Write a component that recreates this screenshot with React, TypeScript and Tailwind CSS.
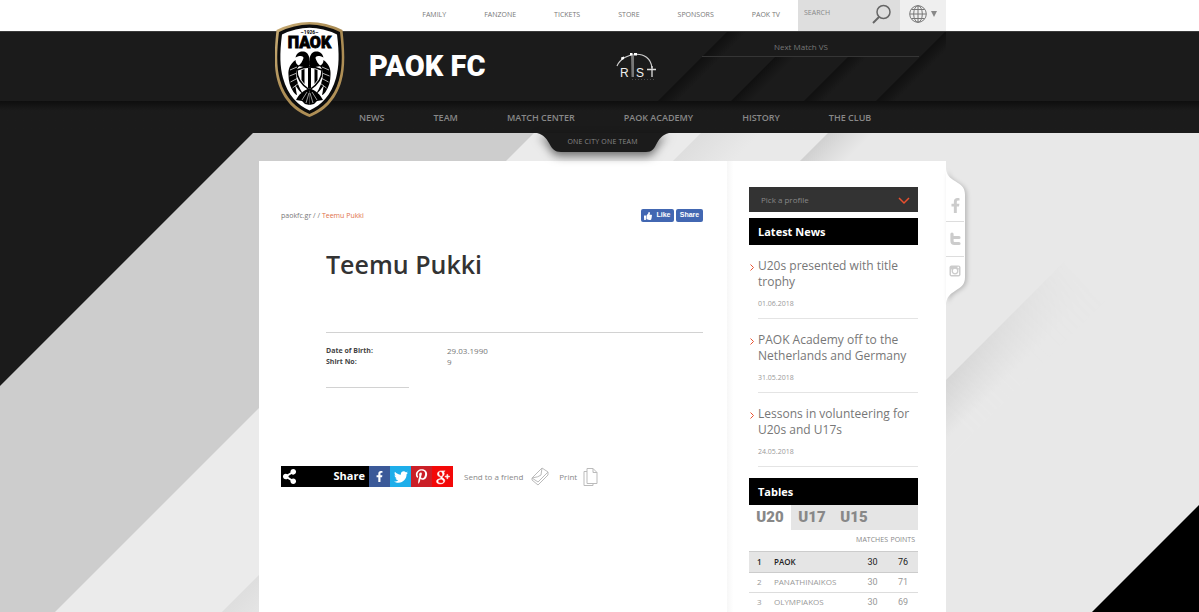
import type { ReactNode } from "react";
import { FaFacebookF, FaPinterestP, FaShareAlt, FaThumbsUp, FaTwitter } from "react-icons/fa";
import { TiSocialGooglePlus } from "react-icons/ti";

const topLinks = ["FAMILY", "FANZONE", "TICKETS", "STORE", "SPONSORS", "PAOK TV"];
const mainLinks = ["NEWS", "TEAM", "MATCH CENTER", "PAOK ACADEMY", "HISTORY", "THE CLUB"];

const news = [
  { title: "U20s presented with title trophy", date: "01.06.2018" },
  { title: "PAOK Academy off to the Netherlands and Germany", date: "31.05.2018" },
  { title: "Lessons in volunteering for U20s and U17s", date: "24.05.2018" },
];

const standings = [
  { rank: 1, team: "PAOK", matches: 30, points: 76 },
  { rank: 2, team: "PANATHINAIKOS", matches: 30, points: 71 },
  { rank: 3, team: "OLYMPIAKOS", matches: 30, points: 69 },
];

const display = "font-['Roboto',sans-serif]";

function Container({ children, className = "" }: { children: ReactNode; className?: string }) {
  return (
    <div className="pl-1.5">
      <div className={`relative mx-auto w-full max-w-[687px] ${className}`}>{children}</div>
    </div>
  );
}

function Backdrop() {
  return (
    <svg
      className="absolute inset-x-0 top-0 h-[612px] w-full"
      viewBox="0 0 1199 612"
      preserveAspectRatio="xMidYMin slice"
      aria-hidden="true"
    >
      <defs>
        <linearGradient id="fold-a" gradientUnits="userSpaceOnUse" x1="417" y1="417" x2="447" y2="447">
          <stop offset="0" stopColor="#dedede" />
          <stop offset="1" stopColor="#e9e9e9" />
        </linearGradient>
        <linearGradient id="fold-b" gradientUnits="userSpaceOnUse" x1="480" y1="480" x2="503" y2="503">
          <stop offset="0" stopColor="#d0d0d0" />
          <stop offset="1" stopColor="#e8e8e8" />
        </linearGradient>
        <linearGradient id="fold-c" gradientUnits="userSpaceOnUse" x1="663" y1="663" x2="693" y2="693">
          <stop offset="0" stopColor="#d3d3d3" />
          <stop offset="1" stopColor="#e8e8e8" />
        </linearGradient>
        <linearGradient id="fade" gradientUnits="userSpaceOnUse" x1="930" y1="396" x2="1065" y2="261">
          <stop offset="0" stopColor="#fff" />
          <stop offset="1" stopColor="#000" />
        </linearGradient>
        <mask id="fold-mask">
          <rect width="1199" height="612" fill="url(#fade)" />
        </mask>
      </defs>
      <rect width="1199" height="612" fill="#e8e8e8" />
      <path d="M534 133H701L222 612H55Z" fill="#ebebeb" />
      <path d="M701 133H828L349 612H222Z" fill="url(#fold-a)" />
      <path d="M828 133H900L800 233H728Z" fill="url(#fold-b)" />
      <path d="M900 426L1100 226H1180L900 506Z" fill="url(#fold-c)" mask="url(#fold-mask)" />
      <path d="M253 133H534L55 612H0V386Z" fill="#cdcdcd" />
      <path d="M0 133H253L0 386Z" fill="#1b1b1b" />
      <path d="M1199 505V612H1092Z" fill="#000" />
    </svg>
  );
}

function Crest() {
  const half = (
    <>
      <path d="M34.500 44C31 43 29.500 41 29 38C28.500 35 26 34 20.500 36.500C21.500 32.500 24 30 28.500 30.500C32.500 31 34.500 35 34.500 39Z" />
      <path d="M29 36C27 41 26 43 23 45L34.500 47V40Z" />
      <path d="M20.500 39C15 43 13 48 13.500 54C13.500 60 15 66 18.500 71C19.500 72.500 21 74 22 74C21 70 21 67 20 64C23 68 24.500 71 28 73C24 67 21.500 60 21 53C21 49 23 46 24.500 45C22 44 20.500 42 20.500 39Z" />
      <path d="M15 49L22 46M14.500 55L22 52M15.500 61L23 57M17.500 67L24 62" stroke="#fff" strokeWidth="0.700" />
      <path d="M34.500 67C28 70 24 73 21 79L27 80L30 83L34.500 84Z" />
      <path d="M32 71L27 79M34 72L31 82" stroke="#fff" strokeWidth="0.600" />
    </>
  );
  return (
    <svg viewBox="0 0 70 97" className="h-[97px] w-[70px]" role="img" aria-label="PAOK crest">
      <defs>
        <linearGradient id="gold" x1="0" x2="1" y1="0" y2="1">
          <stop offset="0" stopColor="#c9ad76" />
          <stop offset="0.500" stopColor="#a98a52" />
          <stop offset="1" stopColor="#b5945a" />
        </linearGradient>
      </defs>
      <path d="M1.500 9Q34.500-7 67.500 9C70 32 70 48 66.500 60C61 80 48 91 34.500 96C21 91 8 80 2.500 60C-1 48-1 32 1.500 9Z" fill="url(#gold)" />
      <path d="M4 11Q34.500-4 65 11C67.500 32 67.500 47 64 59C59 77 47 88 34.500 93C22 88 10 77 5 59C1.500 47 1.500 32 4 11Z" fill="#0c0c0c" />
      <path d="M7 13.500Q34.500 0 62 13.500C64.500 33 64 46 61 57C56.500 74 46 84.500 34.500 89.500C23 84.500 12.500 74 8 57C5 46 4.500 33 7 13.500Z" fill="#fff" />
      <text x="34.500" y="12.500" textAnchor="middle" className={`text-[5px] font-bold ${display}`}>–1926–</text>
      <text x="34.500" y="27" textAnchor="middle" stroke="#000" strokeWidth="0.800" className={`text-[16px] font-black ${display}`}>ΠΑΟΚ</text>
      <g>{half}</g>
      <g transform="matrix(-1 0 0 1 69 0)">{half}</g>
      <path d="M22 49Q34.500 43 47 49C47.500 58 42 64 34.500 69C27 64 21.500 58 22 49Z" fill="#fff" stroke="#000" strokeWidth="1.500" />
      <path d="M26.500 49V59L29.500 63V48ZM33 47H36V67L34.500 68L33 67ZM39.500 48V63L42.500 59V49Z" />
    </svg>
  );
}

function RistLogo() {
  return (
    <svg viewBox="0 0 42 30" className="h-[30px] w-[42px]" role="img" aria-label="RIST">
      <path d="M1 14C7 0 34-4 36 16" fill="none" stroke="#ccc" strokeWidth="1.200" />
      <path d="M15 2H18V25H15.500Z" fill="#777" />
      <path d="M14 1H16.500V3.500H14ZM18 1H21V3.500H18ZM5 5.500L8 4.500V7L5.500 8Z" fill="#fff" />
      <text x="4" y="25" fill="#eee" className="font-['Liberation_Sans',sans-serif] text-[12px]">R</text>
      <text x="20" y="25" fill="#eee" className="font-['Liberation_Sans',sans-serif] text-[12px]">S</text>
      <path d="M31 17.500H40M36 14V25" fill="none" stroke="#ddd" strokeWidth="1.300" />
      <path d="M16 27.500H38" stroke="#555" strokeWidth="0.800" strokeDasharray="1 2" />
    </svg>
  );
}

function HeaderFolds() {
  return (
    <svg viewBox="0 0 290 69" className="absolute right-0 top-0 h-[69px] w-[290px]" aria-hidden="true">
      <defs>
        <linearGradient id="shade" x1="0" x2="1" y1="0" y2="0">
          <stop offset="0" stopColor="#101010" />
          <stop offset="1" stopColor="#1b1b1b" />
        </linearGradient>
      </defs>
      <g transform="skewX(-45)" fill="url(#shade)">
        <rect x="71" width="20" height="70" />
        <rect x="144" y="25" width="20" height="45" />
        <rect x="217" y="25" width="20" height="45" />
        <rect x="289" width="20" height="70" />
      </g>
      <path d="M46 24.500H263" stroke="#353535" />
    </svg>
  );
}

function SiteHeader() {
  return (
    <header className="relative z-10">
      <div className="bg-white">
        <Container className="flex h-[31px] justify-end">
          <nav className="mr-[18px] flex items-center gap-[38px] text-[7px] text-[#777]">
            {topLinks.map((link) => (
              <a key={link} href="#">{link}</a>
            ))}
          </nav>
          <form className="flex w-[102px] items-center bg-[#dedede] pb-1 pl-1.5 pr-2" onSubmit={(event) => event.preventDefault()}>
            <input
              aria-label="Search"
              placeholder="SEARCH"
              className="min-w-0 flex-1 bg-transparent text-[7px] outline-none placeholder:text-[#888]"
            />
            <button aria-label="Submit search">
              <svg viewBox="0 0 22 22" className="h-[22px] w-[22px] fill-none stroke-[#666]">
                <circle cx="13.500" cy="9" r="6.500" strokeWidth="1.500" />
                <path d="M9 14L3 20" strokeWidth="2" />
              </svg>
            </button>
          </form>
          <button className="flex w-[46px] items-center gap-[3px] bg-[#efefef] pb-1 pl-[9px]" aria-label="Choose language">
            <svg viewBox="0 0 18 18" className="h-[18px] w-[18px] fill-none stroke-[#777]">
              <circle cx="9" cy="9" r="8.300" />
              <ellipse cx="9" cy="9" rx="4.300" ry="8.300" />
              <path d="M9 1V17M1 9H17M2.500 4.500H15.500M2.500 13.500H15.500" />
            </svg>
            <svg viewBox="0 0 8 6" className="h-1.5 w-2 fill-[#888]">
              <path d="M1 0H7L4 6Z" />
            </svg>
          </button>
        </Container>
      </div>

      <div className="border-t border-[#3a3a3a] bg-[#1b1b1b]">
        <Container className="flex h-[69px] items-center">
          <HeaderFolds />
          <a href="#" className="absolute -top-[11px] left-4 z-10"><Crest /></a>
          <a href="#" className={`ml-[110px] text-[29px] font-black text-white ${display}`}>PAOK FC</a>
          <a href="#" className="absolute left-[357px] top-5"><RistLogo /></a>
          <p className="absolute right-[118px] top-[9px] text-[8px] leading-[12px] text-[#777]">Next Match VS</p>
        </Container>
      </div>

      <div className="bg-[#1b1b1b] bg-linear-to-b from-[#0e0e0e] to-[#1b1b1b] to-30%">
        <Container className="flex h-8 justify-center">
          <nav className="mr-auto ml-[100px] flex items-center gap-[49px] whitespace-nowrap pt-0.5 text-[9px] font-semibold text-[#888]">
            {mainLinks.map((link) => (
              <a key={link} href="#">{link}</a>
            ))}
          </nav>
          <div className="absolute left-1/2 top-full flex h-[19px] w-[132px] -translate-x-1/2 justify-center">
            <svg viewBox="0 0 132 19" className="absolute inset-0 h-[19px] w-[132px] overflow-visible drop-shadow-[0_4px_5px_rgba(0,0,0,0.55)]" aria-hidden="true">
              <path d="M0 0H132C125 2 123 5 120 10C117 16 115 19 109 19H24C18 19 15 16 12 10C9 5 7 2 0 0Z" fill="#1b1b1b" />
            </svg>
            <p className="relative pt-[3px] text-[7px] leading-[12px] tracking-wide text-[#888]">ONE CITY ONE TEAM</p>
          </div>
        </Container>
      </div>
    </header>
  );
}

function SocialRail() {
  return (
    <div className="absolute left-full top-2 flex h-[134px] w-[18px] flex-col">
      <svg viewBox="0 0 20 134" className="absolute left-0 top-0 h-[134px] w-5 overflow-visible drop-shadow-[2px_1px_2px_rgba(0,0,0,0.2)]" aria-hidden="true">
        <path d="M0 0C1 7 4 9 9 12C15 16 19 18 19 26V108C19 116 15 118 9 122C4 125 1 128 0 134Z" fill="#fff" />
      </svg>
      <a href="#" aria-label="Facebook" className="relative flex h-[53px] items-end justify-center border-b border-[#ddd] pb-2 text-[#ccc]">
        <FaFacebookF size={15} />
      </a>
      <a href="#" aria-label="Twitter" className="relative flex h-[35px] items-center justify-center border-b border-[#ddd]">
        <svg viewBox="0 0 12 14" className="h-[14px] w-3 fill-none stroke-[#ccc]">
          <path d="M3 2V9Q3 11.500 5.500 11.500H10M3 5.500H10" strokeWidth="3.200" strokeLinecap="round" />
        </svg>
      </a>
      <a href="#" aria-label="Instagram" className="relative flex justify-center pt-2">
        <svg viewBox="0 0 12 12" className="h-3 w-3">
          <rect x="0.500" y="0.500" width="11" height="11" rx="2" fill="#ccc" />
          <path d="M2 4.500H10V10H2ZM8.500 1.800H10V3.200H8.500Z" fill="#fff" />
          <circle cx="6" cy="6" r="2.800" fill="#fff" stroke="#ccc" strokeWidth="1.300" />
        </svg>
      </a>
    </div>
  );
}

function ShareBar() {
  return (
    <div className="mt-[78px] flex h-[21px] items-center text-white">
      <div className="flex h-full w-[88px] items-center justify-between bg-black pl-px pr-1">
        <FaShareAlt size={15} />
        <span className="text-[11px] font-bold">Share</span>
      </div>
      <a href="#" aria-label="Share on Facebook" className="flex h-full w-[21px] items-center justify-center bg-[#3b5998]">
        <FaFacebookF size={11} />
      </a>
      <a href="#" aria-label="Share on Twitter" className="flex h-full w-[21px] items-center justify-center bg-[#1eaeea]">
        <FaTwitter size={14} />
      </a>
      <a href="#" aria-label="Share on Pinterest" className="flex h-full w-[21px] items-center justify-center bg-[#cb1f27]">
        <FaPinterestP size={15} />
      </a>
      <a href="#" aria-label="Share on Google Plus" className="flex h-full w-[21px] items-center justify-center bg-[#f30808]">
        <TiSocialGooglePlus size={22} stroke="currentColor" strokeWidth={0.6} />
      </a>
      <a href="#" className="ml-[11px] flex items-center gap-2 text-[8px] text-[#888]">
        Send to a friend
        <svg viewBox="0 0 18 19" className="h-[19px] w-[18px] fill-none stroke-[#bbb]">
          <path d="M1 11L11 1L17 5V8L7 18L1 13ZM1 11L7 15L17 5M11 1L10 8Q8 10 1 11" />
        </svg>
      </a>
      <a href="#" className="ml-[10px] flex items-center gap-1.5 text-[8px] text-[#888]">
        Print
        <svg viewBox="0 0 15 18" className="h-[18px] w-[15px] fill-white stroke-[#bbb]">
          <path d="M1 3.500H10V17.500H1Z" />
          <path d="M4 0.500H10L14 4.500V15.500H4ZM10 0.500V4.500H14" />
        </svg>
      </a>
    </div>
  );
}

function Profile() {
  return (
    <main className="min-w-0 flex-1 pl-[22px] pt-12">
      <div className="flex h-[13px] items-center justify-between">
        <p className="pt-0.5 text-[7px] text-[#777]">
          <a href="#">paokfc.gr</a> / / <span className="text-[#e0704a]">Teemu Pukki</span>
        </p>
        <div className="flex gap-0.5 font-['Liberation_Sans',sans-serif] text-[7px] font-bold text-white">
          <button className="flex h-[13px] w-[33px] items-center justify-center gap-1 rounded-xs bg-[#4267b2]">
            <FaThumbsUp size={8} />
            Like
          </button>
          <button className="h-[13px] w-[27px] rounded-xs bg-[#4267b2]">Share</button>
        </div>
      </div>
      <div className="ml-[45px]">
        <h1 className="mt-6 text-[25px] leading-9 font-semibold text-[#333]">Teemu Pukki</h1>
        <hr className="mt-[50px] border-[#d2d2d2]" />
        <dl className="mt-3 grid grid-cols-[121px_1fr] text-[7px] leading-[11px]">
          <dt className="font-bold text-[#444]">Date of Birth:</dt>
          <dd className="text-[8px] text-[#777]">29.03.1990</dd>
          <dt className="font-bold text-[#444]">Shirt No:</dt>
          <dd className="text-[8px] text-[#777]">9</dd>
        </dl>
        <hr className="mt-5 w-[83px] border-[#d2d2d2]" />
      </div>
      <ShareBar />
    </main>
  );
}

function Sidebar() {
  return (
    <aside className="ml-6 w-[219px] shrink-0 bg-linear-to-r from-[#f7f7f7] to-white to-3% pb-4 pl-[22px] pr-7 pt-[26px]">
      <div className="relative">
        <select aria-label="Pick a profile" className="block h-[25px] w-full appearance-none bg-[#333] pl-3 text-[8px] text-[#888]">
          <option>Pick a profile</option>
        </select>
        <svg viewBox="0 0 12 8" className="pointer-events-none absolute right-2 top-[10px] h-2 w-3 fill-none stroke-[#e8502f]">
          <path d="M1 1L6 6L11 1" strokeWidth="1.500" />
        </svg>
      </div>
      <h2 className="mt-1.5 h-[27px] bg-black pl-[9px] text-[11px] leading-[27px] font-bold text-white">Latest News</h2>
      <ul>
        {news.map((item) => (
          <li key={item.date} className="relative ml-[9px] border-b border-[#e4e4e4] pb-[9px] pt-[13px]">
            <svg viewBox="0 0 4 7" className="absolute -left-2 top-[19px] h-[7px] w-1 fill-none stroke-[#e8502f]">
              <path d="M0.500 0.500L3.500 3.500L0.500 6.500" />
            </svg>
            <a href="#" className="block text-[12px] leading-4 text-[#777]">{item.title}</a>
            <time className="mt-2 block text-[7px] leading-[11px] text-[#999]">{item.date}</time>
          </li>
        ))}
      </ul>
      <h2 className="mt-[11px] h-[27px] bg-black pl-[9px] text-[11px] leading-[27px] font-bold text-white">Tables</h2>
      <div className={`flex h-[25px] bg-[#e5e5e5] text-[15px] font-black text-[#888] ${display}`}>
        <button className="w-[42px] bg-white">U20</button>
        <button className="w-[42px]">U17</button>
        <button className="w-[42px]">U15</button>
      </div>
      <table className="w-full table-fixed border-collapse text-left text-[8px] text-[#999]">
        <colgroup>
          <col className="w-[25px]" />
          <col />
          <col className="w-[31px]" />
          <col className="w-[30px]" />
        </colgroup>
        <thead>
          <tr className="h-[21px] text-[7px] text-[#888]">
            <th colSpan={3} className="p-0 text-right font-normal">MATCHES</th>
            <th className="p-0 pr-[3px] text-right font-normal">POINTS</th>
          </tr>
        </thead>
        <tbody>
          {standings.map((row) => (
            <tr
              key={row.rank}
              className={
                row.rank === 1
                  ? "h-[21px] border-y border-[#ccc] bg-[#e5e5e5] font-semibold text-[#222]"
                  : "h-5 border-b border-[#ddd]"
              }
            >
              <td className="p-0 pl-2 leading-[12px]">{row.rank}</td>
              <td className="p-0 leading-[12px]">{row.team}</td>
              <td className={`p-0 text-center text-[9px] leading-[12px] font-normal ${display}`}>{row.matches}</td>
              <td className={`p-0 text-center text-[9px] leading-[12px] font-normal ${display}`}>{row.points}</td>
            </tr>
          ))}
        </tbody>
      </table>
    </aside>
  );
}

export default function App() {
  return (
    <div className="relative flex min-h-screen flex-col overflow-hidden bg-[#e8e8e8] font-['Open_Sans',sans-serif]">
      <Backdrop />
      <SiteHeader />
      <Container className="mt-7 flex min-h-[451px] bg-white">
        <Profile />
        <Sidebar />
        <SocialRail />
      </Container>
    </div>
  );
}
